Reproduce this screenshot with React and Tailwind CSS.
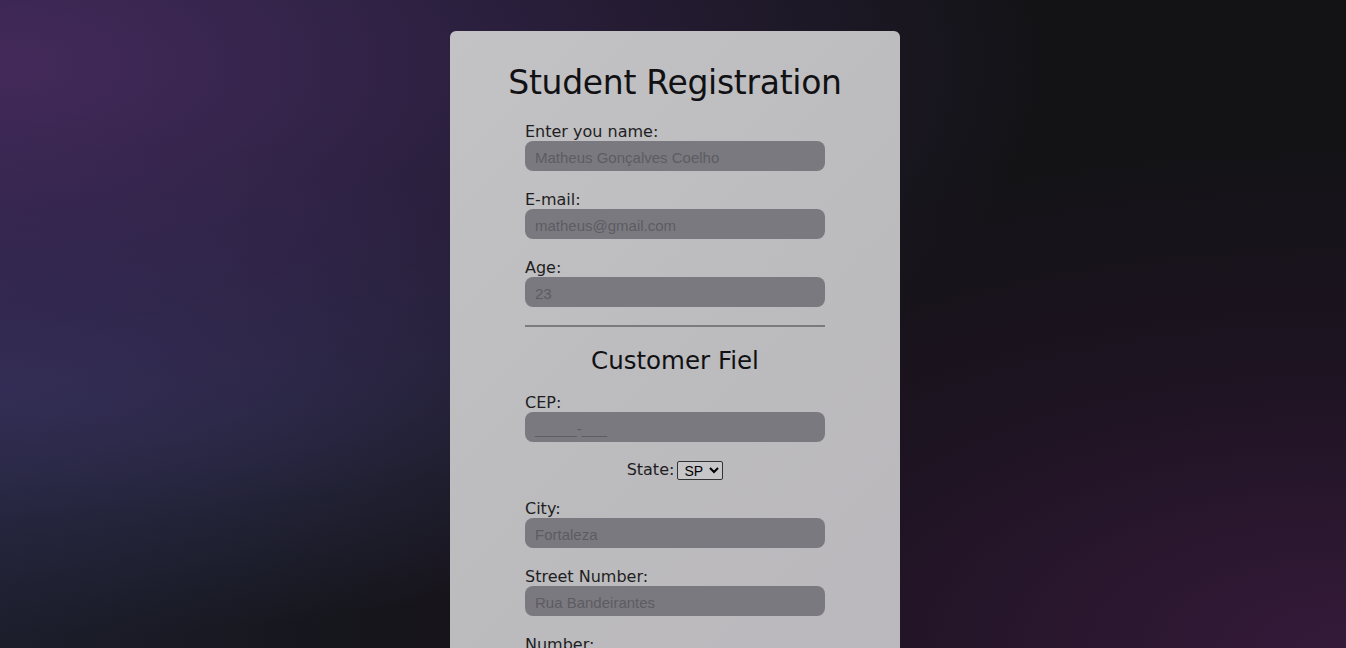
import React from 'react';

const Field = ({ label, placeholder, type = 'text' }) => (
    <div className="flex flex-col mb-[18px]">
        <label className="h-[20px] text-[16px] leading-[22px] text-[#1e1e22]">{label}</label>
        <input
            type={type}
            placeholder={placeholder}
            className="h-[30px] w-[300px] rounded-lg bg-[#7a797f] px-[10px] pt-[2px] text-[15px] text-[#2a2a2e] placeholder:text-[#5d5c62] outline-none"
            style={{ fontFamily: '"Liberation Sans", Arial, sans-serif' }}
        />
    </div>
);

const App = () => {
    return (
        <div
            className="h-[648px] w-full overflow-hidden flex justify-center pl-[4px] bg-[radial-gradient(ellipse_at_0%_10%,#43295a_0%,rgba(60,40,90,0.6)_25%,transparent_55%),radial-gradient(ellipse_at_0%_60%,#2f2f52_0%,transparent_45%),radial-gradient(ellipse_at_100%_100%,#351a3a_0%,rgba(40,20,45,0.5)_30%,transparent_55%),linear-gradient(90deg,#1c1e2c_0%,#131316_35%)]"
            style={{ fontFamily: '"DejaVu Sans", sans-serif' }}
        >
            <div className="mt-[31px] w-[450px] h-[700px] rounded-md bg-[linear-gradient(135deg,#c3c2c5_0%,#bcbbbe_50%,#bab8bc_100%)] pt-[32px] flex flex-col items-center">
                <h1 className="text-[33px] leading-[40px] text-[#111114] mb-[18px] tracking-[-0.3px]">Student Registration</h1>
                <form className="flex flex-col w-[300px]">
                    <Field label="Enter you name:" placeholder="Matheus Gonçalves Coelho" />
                    <Field label="E-mail:" placeholder="matheus@gmail.com" type="email" />
                    <Field label="Age:" placeholder="23" />
                    <div className="h-[2px] w-[300px] bg-[#7b7a7f]"></div>
                    <h2 className="text-[24.5px] leading-[32px] text-[#111114] text-center mt-[18px] mb-[15px]">Customer Fiel</h2>
                    <Field label="CEP:" placeholder="_____-___" />
                    <div className="flex items-center justify-center gap-[3px] h-[20px] mb-[18px]">
                        <span className="text-[16px] text-[#1e1e22]">State:</span>
                        <select
                            className="h-[19px] w-[46px] border border-[#333] rounded-[2px] bg-[#c7c6c9] text-[14px] text-black px-[2px]"
                            style={{ fontFamily: '"Liberation Sans", Arial, sans-serif' }}
                            defaultValue="SP"
                        >
                            <option>SP</option>
                            <option>RJ</option>
                            <option>CE</option>
                        </select>
                    </div>
                    <Field label="City:" placeholder="Fortaleza" />
                    <Field label="Street Number:" placeholder="Rua Bandeirantes" />
                    <Field label="Number:" placeholder="123" />
                </form>
            </div>
        </div>
    );
};

export default App;
